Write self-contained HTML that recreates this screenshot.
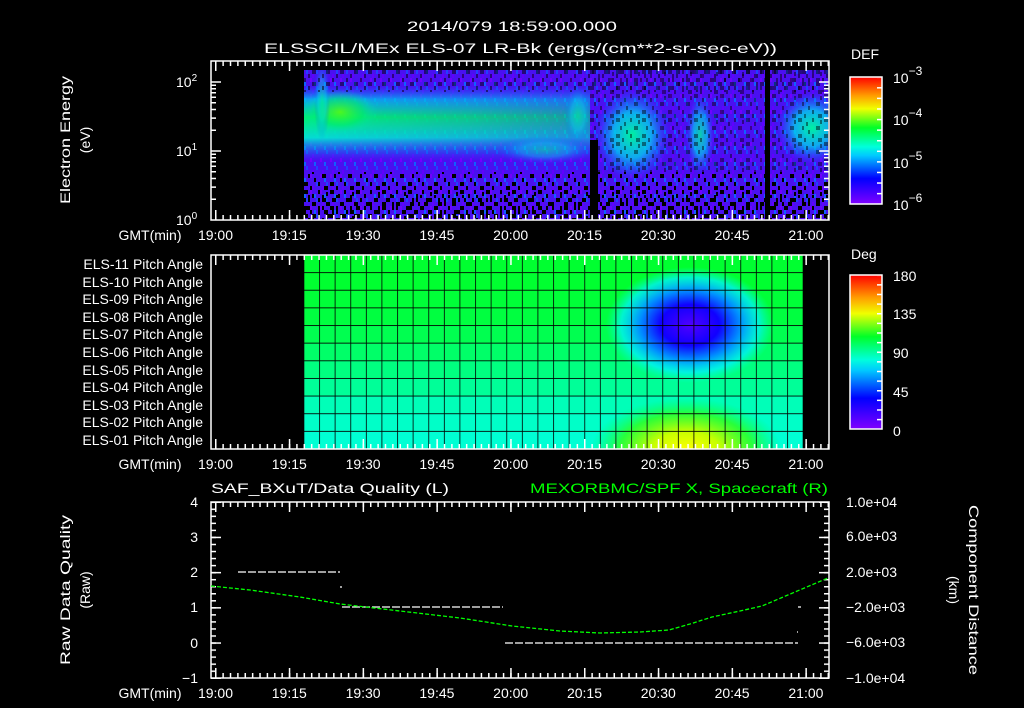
<!DOCTYPE html>
<html><head><meta charset="utf-8"><style>
html,body{margin:0;padding:0;background:#000;width:1024px;height:708px;overflow:hidden}
svg{position:absolute;left:0;top:0}
text{font-family:"Liberation Sans",sans-serif;fill:#fff;font-size:14px}
</style></head><body>
<svg width="1024" height="708" xmlns="http://www.w3.org/2000/svg">
<defs>
<linearGradient id="cb" x1="0" y1="1" x2="0" y2="0">
<stop offset="0" stop-color="#8000ff"/><stop offset="0.2" stop-color="#0000ff"/><stop offset="0.38" stop-color="#00c8ff"/><stop offset="0.45" stop-color="#00ffdc"/><stop offset="0.6" stop-color="#00ff28"/><stop offset="0.75" stop-color="#f0ff00"/><stop offset="0.85" stop-color="#ffa000"/><stop offset="1" stop-color="#ff0000"/>
</linearGradient>
<linearGradient id="band" x1="0" y1="0" x2="0" y2="1">
<stop offset="0" stop-color="#0080ff" stop-opacity="0"/><stop offset="0.18" stop-color="#00c0f0" stop-opacity="0.85"/><stop offset="0.42" stop-color="#00f070"/><stop offset="0.7" stop-color="#00e8d0" stop-opacity="0.95"/><stop offset="1" stop-color="#0080ff" stop-opacity="0"/>
</linearGradient>
<linearGradient id="bandfade" x1="0" y1="0" x2="1" y2="0">
<stop offset="0" stop-color="#fff"/><stop offset="0.6" stop-color="#fff" stop-opacity="0.8"/><stop offset="1" stop-color="#fff" stop-opacity="0.6"/>
</linearGradient>
<mask id="bm"><rect x="304" y="70" width="286" height="150" fill="url(#bandfade)"/></mask>
<radialGradient id="blob"><stop offset="0" stop-color="#00f0a0"/><stop offset="0.5" stop-color="#00d0f0" stop-opacity="0.8"/><stop offset="1" stop-color="#0060ff" stop-opacity="0"/></radialGradient>
<radialGradient id="greenblob"><stop offset="0" stop-color="#60ff00"/><stop offset="0.6" stop-color="#00f060" stop-opacity="0.7"/><stop offset="1" stop-color="#00e0c0" stop-opacity="0"/></radialGradient>
<pattern id="spk" patternUnits="userSpaceOnUse" x="304" y="70" width="26" height="24">
<rect x="0" y="0" width="4" height="4" fill="#000"/><rect x="8" y="4" width="2" height="4" fill="#000"/><rect x="14" y="0" width="2" height="4" fill="#000"/><rect x="4" y="8" width="2" height="4" fill="#000"/><rect x="18" y="8" width="4" height="4" fill="#000"/><rect x="10" y="12" width="2" height="4" fill="#000"/><rect x="0" y="16" width="4" height="4" fill="#000"/><rect x="14" y="16" width="2" height="4" fill="#000"/><rect x="22" y="2" width="2" height="4" fill="#000"/><rect x="20" y="20" width="4" height="4" fill="#000"/><rect x="6" y="20" width="2" height="4" fill="#000"/>
</pattern>
<pattern id="spk2" patternUnits="userSpaceOnUse" x="300" y="70" width="14" height="12">
<rect x="0" y="0" width="2" height="4" fill="#000"/><rect x="8" y="4" width="2" height="4" fill="#000"/><rect x="4" y="8" width="2" height="4" fill="#000"/><rect x="12" y="0" width="2" height="4" fill="#000"/>
</pattern>
<pattern id="vio" patternUnits="userSpaceOnUse" x="304" y="70" width="10" height="16">
<rect x="0" y="0" width="10" height="16" fill="#4a10f0"/><rect x="2" y="0" width="2" height="4" fill="#2040ff"/><rect x="6" y="8" width="2" height="4" fill="#7000ff"/><rect x="0" y="12" width="2" height="4" fill="#1060ff"/><rect x="8" y="4" width="2" height="4" fill="#6000ff"/>
</pattern>
<clipPath id="sc"><rect x="304" y="70" width="524" height="150"/></clipPath>
<radialGradient id="pblue"><stop offset="0" stop-color="#5000ff"/><stop offset="0.35" stop-color="#1000ff"/><stop offset="0.6" stop-color="#0090ff"/><stop offset="0.82" stop-color="#00f0ff" stop-opacity="0.75"/><stop offset="1" stop-color="#00ffd0" stop-opacity="0"/></radialGradient>
<radialGradient id="pyel"><stop offset="0" stop-color="#ffff00"/><stop offset="0.35" stop-color="#c8ff00"/><stop offset="0.7" stop-color="#30ff20" stop-opacity="0.85"/><stop offset="1" stop-color="#00ff60" stop-opacity="0"/></radialGradient>
<pattern id="grid" patternUnits="userSpaceOnUse" x="303.5" y="254.5" width="15.6" height="17.64">
<path d="M0 0V17.64M0 0H15.6" stroke="#000" stroke-width="1.6" fill="none"/>
</pattern>
<clipPath id="pc"><rect x="304" y="255" width="499" height="194"/></clipPath>
<pattern id="tmin" patternUnits="userSpaceOnUse" x="215" y="0" width="7.38" height="708"><rect x="0" y="0" width="1.5" height="708" fill="#fff"/></pattern>
<pattern id="tmaj" patternUnits="userSpaceOnUse" x="215" y="0" width="73.8" height="708"><rect x="0" y="0" width="1.5" height="708" fill="#fff"/></pattern>
<pattern id="ymin" patternUnits="userSpaceOnUse" x="0" y="501.5" width="1024" height="7.04"><rect x="0" y="0" width="1024" height="1.5" fill="#fff"/></pattern>
<pattern id="ymaj" patternUnits="userSpaceOnUse" x="0" y="501.5" width="1024" height="35.2"><rect x="0" y="0" width="1024" height="1.5" fill="#fff"/></pattern>
<pattern id="cbt" patternUnits="userSpaceOnUse" x="0" y="274.5" width="1024" height="9.625"><rect x="0" y="0" width="1024" height="1.5" fill="#fff"/></pattern>
<pattern id="cbt2" patternUnits="userSpaceOnUse" x="0" y="76.5" width="1024" height="10.58"><rect x="0" y="0" width="1024" height="1.5" fill="#fff"/></pattern>
</defs>

<g clip-path="url(#sc)">
<rect x="304" y="70" width="524" height="150" fill="url(#vio)"/>
<rect x="304" y="86" width="286" height="74" fill="url(#band)" mask="url(#bm)"/>
<ellipse cx="340" cy="112" rx="38" ry="22" fill="url(#greenblob)" opacity="0.8"/>
<ellipse cx="322" cy="100" rx="8" ry="40" fill="url(#blob)" opacity="0.6"/>
<ellipse cx="545" cy="150" rx="50" ry="14" fill="url(#blob)" opacity="0.55"/>
<ellipse cx="578" cy="115" rx="14" ry="30" fill="url(#blob)" opacity="0.6"/>
<ellipse cx="632" cy="135" rx="38" ry="46" fill="url(#blob)"/>
<ellipse cx="700" cy="135" rx="14" ry="40" fill="url(#blob)" opacity="0.85"/>
<ellipse cx="812" cy="128" rx="36" ry="36" fill="url(#blob)"/>
<rect x="304" y="70" width="524" height="22" fill="url(#spk2)" opacity="0.5"/>
<rect x="590" y="70" width="238" height="150" fill="url(#spk)" opacity="0.45"/>
<rect x="304" y="172" width="524" height="48" fill="url(#spk)"/>
<rect x="304" y="195" width="524" height="25" fill="url(#spk2)"/>
<rect x="590" y="140" width="8" height="80" fill="#000"/>
<rect x="765" y="70" width="5" height="150" fill="#000"/>
</g>

<rect x="850" y="77" width="32" height="127" fill="url(#cb)" stroke="#fff" stroke-width="1.5"/>
<rect x="850" y="275" width="32" height="154" fill="url(#cb)" stroke="#fff" stroke-width="1.5"/>
<rect x="877" y="78" width="5" height="126" fill="url(#cbt2)"/>
<rect x="877" y="276" width="5" height="153" fill="url(#cbt)"/>

<g clip-path="url(#pc)">
<rect x="304" y="255" width="499" height="18" fill="#00ff30"/>
<rect x="304" y="272.6" width="499" height="18" fill="#00ff30"/>
<rect x="304" y="290.3" width="499" height="18" fill="#00ff38"/>
<rect x="304" y="307.9" width="499" height="18" fill="#00ff40"/>
<rect x="304" y="325.6" width="499" height="18" fill="#00ff50"/>
<rect x="304" y="343.2" width="499" height="18" fill="#00ff68"/>
<rect x="304" y="360.8" width="499" height="18" fill="#00ff80"/>
<rect x="304" y="378.5" width="499" height="18" fill="#00ff98"/>
<rect x="304" y="396.1" width="499" height="18" fill="#00ffb8"/>
<rect x="304" y="413.8" width="499" height="18" fill="#00ffc8"/>
<rect x="304" y="431.4" width="499" height="18" fill="#00ffd4"/>
<ellipse cx="690" cy="325" rx="84" ry="58" fill="url(#pblue)"/>
<ellipse cx="686" cy="450" rx="95" ry="52" fill="url(#pyel)"/>
<rect x="304" y="255" width="500" height="195" fill="url(#grid)"/>
</g>

<g stroke="#fff" stroke-width="1.5" fill="none">
<rect x="211" y="61" width="618" height="159"/>
<rect x="211" y="255" width="618" height="194"/>
<rect x="211" y="502" width="618" height="176"/>
</g>
<g>
<rect x="211" y="61" width="618" height="5" fill="url(#tmin)"/><rect x="211" y="61" width="618" height="10" fill="url(#tmaj)"/>
<rect x="211" y="215" width="618" height="5" fill="url(#tmin)"/><rect x="211" y="210" width="618" height="10" fill="url(#tmaj)"/>
<rect x="211" y="255" width="618" height="5" fill="url(#tmin)"/><rect x="211" y="255" width="618" height="10" fill="url(#tmaj)"/>
<rect x="211" y="444" width="618" height="5" fill="url(#tmin)"/><rect x="211" y="439" width="618" height="10" fill="url(#tmaj)"/>
<rect x="211" y="502" width="618" height="5" fill="url(#tmin)"/><rect x="211" y="502" width="618" height="10" fill="url(#tmaj)"/>
<rect x="211" y="673" width="618" height="5" fill="url(#tmin)"/><rect x="211" y="668" width="618" height="10" fill="url(#tmaj)"/>
<rect x="211" y="502" width="5" height="177" fill="url(#ymin)"/><rect x="211" y="502" width="10" height="177" fill="url(#ymaj)"/>
<rect x="824" y="502" width="5" height="177" fill="url(#ymin)"/><rect x="819" y="502" width="10" height="177" fill="url(#ymaj)"/>
</g>
<path stroke="#fff" stroke-width="1.5" d="M211 151h10M211 82h10M829 151h-10M829 82h-10
M211 199.2h5M211 187.1h5M211 178.5h5M211 171.8h5M211 166.3h5M211 161.7h5M211 157.7h5M211 154.2h5
M211 130.2h5M211 118.1h5M211 109.5h5M211 102.8h5M211 97.3h5M211 92.7h5M211 88.7h5M211 85.2h5
M829 199.2h-5M829 187.1h-5M829 178.5h-5M829 171.8h-5M829 166.3h-5M829 161.7h-5M829 157.7h-5M829 154.2h-5
M829 130.2h-5M829 118.1h-5M829 109.5h-5M829 102.8h-5M829 97.3h-5M829 92.7h-5M829 88.7h-5M829 85.2h-5"/>

<g stroke="#fff" stroke-width="1.3" stroke-dasharray="8,2">
<line x1="238" y1="572" x2="340" y2="572"/>
<line x1="342" y1="607" x2="503" y2="607"/>
<line x1="505" y1="643" x2="798" y2="643"/>
</g>
<path d="M340 587h2M798 607h3M797 632h1" stroke="#fff" stroke-width="1.3"/>
<polyline fill="none" stroke="#00ff00" stroke-width="1.3" stroke-dasharray="4,2" points="211,586 250,590 300,597 340,604 400,611 460,618 512,626 560,631 600,633 640,632 669,630 690,624 712,617 740,611 762,606 795,592 828,578"/>

<text x="512" y="31" text-anchor="middle" font-size="16" textLength="210" lengthAdjust="spacingAndGlyphs">2014/079 18:59:00.000</text>
<text x="264" y="53" font-size="16" textLength="513" lengthAdjust="spacingAndGlyphs">ELSSCIL/MEx ELS-07 LR-Bk  (ergs/(cm**2-sr-sec-eV))</text>
<text transform="translate(70,140) rotate(-90)" text-anchor="middle" font-size="15" textLength="128" lengthAdjust="spacingAndGlyphs">Electron Energy</text>
<text transform="translate(90,140) rotate(-90)" text-anchor="middle" font-size="15">(eV)</text>
<text x="176" y="87" font-size="14">10<tspan dy="-6" font-size="10">2</tspan></text>
<text x="176" y="156" font-size="14">10<tspan dy="-6" font-size="10">1</tspan></text>
<text x="176" y="225" font-size="14">10<tspan dy="-6" font-size="10">0</tspan></text>
<text x="851" y="59" font-size="16">DEF</text>
<text x="893" y="83" font-size="17">10<tspan dy="-8" font-size="12">−3</tspan></text>
<text x="893" y="125" font-size="17">10<tspan dy="-8" font-size="12">−4</tspan></text>
<text x="893" y="168" font-size="17">10<tspan dy="-8" font-size="12">−5</tspan></text>
<text x="893" y="210" font-size="17">10<tspan dy="-8" font-size="12">−6</tspan></text>
<text x="851" y="259" font-size="16">Deg</text>
<text x="893" y="281" font-size="17">180</text>
<text x="893" y="319" font-size="17">135</text>
<text x="893" y="358" font-size="17">90</text>
<text x="893" y="397" font-size="17">45</text>
<text x="893" y="436" font-size="17">0</text>
<g font-size="13" text-anchor="end">
<text x="203" y="269">ELS-11 Pitch Angle</text>
<text x="203" y="287">ELS-10 Pitch Angle</text>
<text x="203" y="304">ELS-09 Pitch Angle</text>
<text x="203" y="322">ELS-08 Pitch Angle</text>
<text x="203" y="339">ELS-07 Pitch Angle</text>
<text x="203" y="357">ELS-06 Pitch Angle</text>
<text x="203" y="375">ELS-05 Pitch Angle</text>
<text x="203" y="392">ELS-04 Pitch Angle</text>
<text x="203" y="410">ELS-03 Pitch Angle</text>
<text x="203" y="427">ELS-02 Pitch Angle</text>
<text x="203" y="445">ELS-01 Pitch Angle</text>
</g>
<text x="211" y="493" font-size="15" textLength="238" lengthAdjust="spacingAndGlyphs">SAF_BXuT/Data Quality (L)</text>
<text x="530" y="493" font-size="15" style="fill:#00ff00" textLength="298" lengthAdjust="spacingAndGlyphs">MEXORBMC/SPF X, Spacecraft (R)</text>
<g font-size="14" text-anchor="end">
<text x="198" y="507">4</text><text x="198" y="542">3</text><text x="198" y="577">2</text><text x="198" y="612">1</text><text x="198" y="648">0</text><text x="198" y="683">−1</text>
</g>
<g font-size="14">
<text x="846" y="507">1.0e+04</text><text x="846" y="541">6.0e+03</text><text x="846" y="577">2.0e+03</text><text x="846" y="612">−2.0e+03</text><text x="846" y="647">−6.0e+03</text><text x="846" y="683">−1.0e+04</text>
</g>
<text transform="translate(70,590) rotate(-90)" text-anchor="middle" font-size="15" textLength="150" lengthAdjust="spacingAndGlyphs">Raw Data Quality</text>
<text transform="translate(90,590) rotate(-90)" text-anchor="middle" font-size="15">(Raw)</text>
<text transform="translate(969,590) rotate(90)" text-anchor="middle" font-size="15" textLength="170" lengthAdjust="spacingAndGlyphs">Component Distance</text>
<text transform="translate(949,590) rotate(90)" text-anchor="middle" font-size="15">(km)</text>
<g font-size="14" text-anchor="middle">
<text x="150" y="240">GMT(min)</text><text x="215.5" y="240">19:00</text><text x="289.3" y="240">19:15</text><text x="363.1" y="240">19:30</text><text x="436.9" y="240">19:45</text><text x="510.7" y="240">20:00</text><text x="584.5" y="240">20:15</text><text x="658.3" y="240">20:30</text><text x="732.1" y="240">20:45</text><text x="805.9" y="240">21:00</text>
<text x="150" y="469">GMT(min)</text><text x="215.5" y="469">19:00</text><text x="289.3" y="469">19:15</text><text x="363.1" y="469">19:30</text><text x="436.9" y="469">19:45</text><text x="510.7" y="469">20:00</text><text x="584.5" y="469">20:15</text><text x="658.3" y="469">20:30</text><text x="732.1" y="469">20:45</text><text x="805.9" y="469">21:00</text>
<text x="150" y="698">GMT(min)</text><text x="215.5" y="698">19:00</text><text x="289.3" y="698">19:15</text><text x="363.1" y="698">19:30</text><text x="436.9" y="698">19:45</text><text x="510.7" y="698">20:00</text><text x="584.5" y="698">20:15</text><text x="658.3" y="698">20:30</text><text x="732.1" y="698">20:45</text><text x="805.9" y="698">21:00</text>
</g>
</svg>
</body></html>
